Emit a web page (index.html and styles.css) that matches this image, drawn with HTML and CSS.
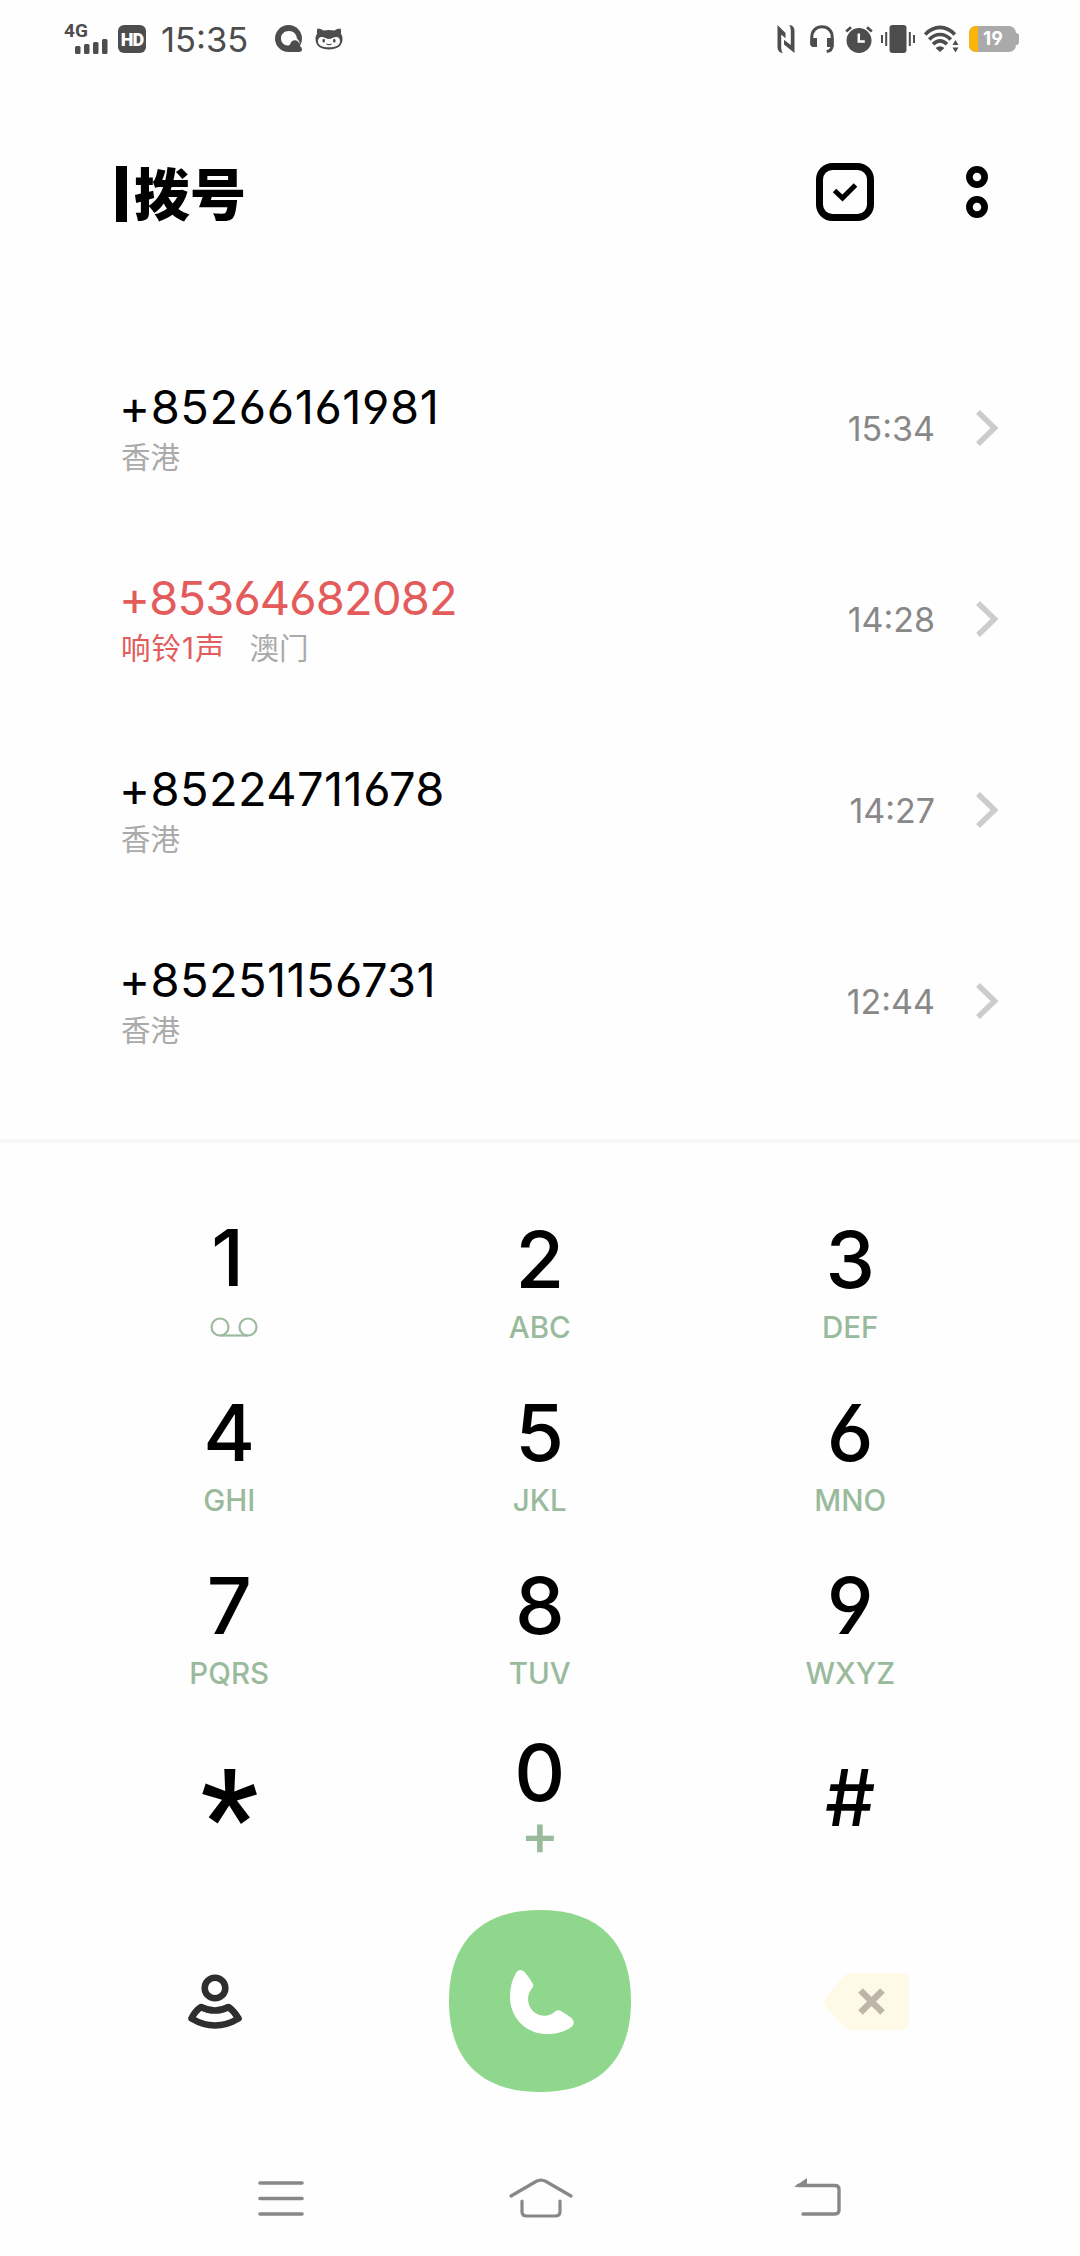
FILE: index.html
```html
<!DOCTYPE html>
<html lang="zh-CN">
<head>
    <meta charset="UTF-8">
    <title>拨号</title>
    <link rel="stylesheet" href="styles.css">
</head>
<body>
    <div class="status-bar">
        <div class="status-left">
            <div class="signal">
                <span class="signal-type">4G</span>
                <svg class="signal-bars" width="33" height="16" viewBox="0 0 33 16" fill="#4d4d4d">
                    <rect x="0" y="8" width="5.5" height="8" rx="1.5"/>
                    <rect x="9" y="6" width="5.5" height="10" rx="1.5"/>
                    <rect x="18" y="4" width="5.5" height="12" rx="1.5"/>
                    <rect x="27" y="1" width="5.5" height="15" rx="1.5"/>
                </svg>
            </div>
            <div class="hd-badge">HD</div>
            <span class="clock">15:35</span>
            <svg class="q-icon" width="28" height="28" viewBox="0 0 28 28">
                <circle cx="13.5" cy="13.5" r="13.5" fill="#4d4d4d"/>
                <path d="M14 6c-5 0-8 3.400-8 7.500 0 4 3 7 6.500 7 1.500 0 2.500-.5 3-2 .6-2 2.500-3.500 4.700-3.300 1.600.1 3.300 1.300 5.300 4.300-1.500-4-2.600-5-3.500-6C21.500 9 18.500 6 14 6z" fill="#fdfdfd"/>
                <path d="M12 22c2-1 3-1.500 4-3.500 1.600-3 5.600-2.600 7.300.2 1.100 1.900 3.700 3.300 3.700 5.600 0 1.800-1 2.700-3 2.700h-9z" fill="#4d4d4d"/>
            </svg>
            <svg class="cat-icon" width="28" height="22" viewBox="0 0 28 22">
                <path d="M2.500.5C4.500.5 7 1.300 8.500 2.600c3.500-.7 7.500-.7 11 0C21 1.300 23.500.5 25.500.5c.7 2 .8 3.700.4 5.300C27.200 7.500 27.500 9 27.500 11c0 7-5.500 10.500-13.500 10.500S.5 18 .5 11c0-2 .3-3.500 1.600-5.200C1.700 4.200 1.800 2.500 2.500.5z" fill="#4d4d4d"/>
                <path d="M6 9c2.500-.7 5.500 2 8 2s5.500-2.700 8-2c2 .6 3 2 3 4.200 0 4.300-4.600 6.100-11 6.100S3 17.500 3 13.200C3 11 4 9.600 6 9z" fill="#fdfdfd"/>
                <ellipse cx="8.700" cy="12.700" rx="1.300" ry="1.900" fill="#4d4d4d"/>
                <ellipse cx="19.300" cy="12.700" rx="1.300" ry="1.900" fill="#4d4d4d"/>
                <path d="M11.500 16q2.500 1.300 5 0" fill="none" stroke="#4d4d4d" stroke-width="1.200"/>
            </svg>
        </div>
        <div class="status-right">
            <svg width="18" height="28" viewBox="0 0 18 28" fill="#4d4d4d">
                <path d="M.5 0L8.500 8v5.200L4.200 9.500V23q0 3 1.600 5Q.5 27.500.5 22z"/>
                <path d="M17.500 28L7 19.500v-4.700l6.800 5.200V5q0-3-1.600-5 5.300.5 5.300 6z"/>
            </svg>
            <svg class="headset" width="24" height="28" viewBox="0 0 24 28">
                <path d="M1.800 20v-8C1.800 6 6 1.800 12 1.800S22.200 6 22.200 12v8q0 6-5.500 6.500" fill="none" stroke="#4d4d4d" stroke-width="3"/>
                <path d="M.5 13H7v9H3Q.5 22 .5 19zM17 13h6.500v9H17z" fill="#4d4d4d"/>
            </svg>
            <svg class="alarm" width="28" height="28" viewBox="0 0 28 28">
                <circle cx="14" cy="15.500" r="12.500" fill="#4d4d4d"/>
                <path d="M1.200 6.500L6 2.200M26.800 6.500L22 2.200" stroke="#4d4d4d" stroke-width="2.800"/>
                <path d="M13.800 8.500v8h6" fill="none" stroke="#fdfdfd" stroke-width="2.500"/>
            </svg>
            <svg class="vibrate" width="34" height="28" viewBox="0 0 34 28" fill="#4d4d4d">
                <rect x="8.500" y="0" width="17" height="28" rx="3"/>
                <rect x="4.200" y="7" width="2" height="14"/>
                <rect x="0" y="10" width="2" height="8"/>
                <rect x="27.800" y="7" width="2" height="14"/>
                <rect x="32" y="10" width="2" height="8"/>
            </svg>
            <svg class="wifi" width="36" height="28" viewBox="0 0 36 28">
                <g fill="none" stroke="#4d4d4d" stroke-width="3.600">
                    <path d="M1.200 9.500C10 0 22 0 30.800 9.500"/>
                    <path d="M5.200 14.500C11.500 7.800 20.500 7.800 26.800 14.500"/>
                    <path d="M9 19.300c4.500-4.400 9.500-4.400 14 0"/>
                </g>
                <path d="M11.500 23q4.500-3.500 9 0L16 27z" fill="#4d4d4d"/>
                <path d="M28.500 20l3-5 3 5zM28.500 22.500h6l-3 5z" fill="#4d4d4d"/>
            </svg>
            <div class="battery">
                <div class="battery-body">
                    <span class="battery-level"></span>
                    <span class="battery-text">19</span>
                </div>
                <span class="battery-tip"></span>
            </div>
        </div>
    </div>

    <div class="header">
        <div class="header-title">
            <span class="title-bar"></span>
            <h1>拨号</h1>
        </div>
        <div class="header-actions">
            <svg width="58" height="58" viewBox="0 0 58 58" fill="none" stroke="#000">
                <rect x="3.500" y="3.500" width="51" height="51" rx="13" stroke-width="7"/>
                <path d="M18.500 27.500l8 7.500 13-13" stroke-width="5"/>
            </svg>
            <svg class="more" width="22" height="52" viewBox="0 0 22 52" fill="none" stroke="#000" stroke-width="6.700">
                <circle cx="11" cy="11" r="7.600"/>
                <circle cx="11" cy="41" r="7.600"/>
            </svg>
        </div>
    </div>

    <div class="call-list">
        <div class="call-item">
            <div class="call-info">
                <div class="call-number">+85266161981</div>
                <div class="call-place">香港</div>
            </div>
            <span class="call-time">15:34</span>
            <svg class="chevron" width="22" height="36" viewBox="0 0 22 36"><path d="M2 2l16.500 16L2 34"/></svg>
        </div>
        <div class="call-item missed">
            <div class="call-info">
                <div class="call-number">+85364682082</div>
                <div class="call-place"><span class="ring">响铃1声</span>澳门</div>
            </div>
            <span class="call-time">14:28</span>
            <svg class="chevron" width="22" height="36" viewBox="0 0 22 36"><path d="M2 2l16.500 16L2 34"/></svg>
        </div>
        <div class="call-item">
            <div class="call-info">
                <div class="call-number">+85224711678</div>
                <div class="call-place">香港</div>
            </div>
            <span class="call-time">14:27</span>
            <svg class="chevron" width="22" height="36" viewBox="0 0 22 36"><path d="M2 2l16.500 16L2 34"/></svg>
        </div>
        <div class="call-item">
            <div class="call-info">
                <div class="call-number">+85251156731</div>
                <div class="call-place">香港</div>
            </div>
            <span class="call-time">12:44</span>
            <svg class="chevron" width="22" height="36" viewBox="0 0 22 36"><path d="M2 2l16.500 16L2 34"/></svg>
        </div>
    </div>

    <div class="keypad">
        <div class="key key-one">
            <span class="digit">1</span>
            <svg class="voicemail" width="48" height="20" viewBox="0 0 48 20" fill="none" stroke="#9dba9e" stroke-width="2.200">
                <circle cx="10" cy="10" r="8.500"/>
                <circle cx="38" cy="10" r="8.500"/>
                <path d="M10 18.500h28"/>
            </svg>
        </div>
        <div class="key"><span class="digit">2</span><span class="letters">ABC</span></div>
        <div class="key"><span class="digit">3</span><span class="letters">DEF</span></div>
        <div class="key"><span class="digit">4</span><span class="letters">GHI</span></div>
        <div class="key"><span class="digit">5</span><span class="letters">JKL</span></div>
        <div class="key"><span class="digit">6</span><span class="letters">MNO</span></div>
        <div class="key"><span class="digit">7</span><span class="letters">PQRS</span></div>
        <div class="key"><span class="digit">8</span><span class="letters">TUV</span></div>
        <div class="key"><span class="digit">9</span><span class="letters">WXYZ</span></div>
        <div class="key key-star"><span class="digit">*</span></div>
        <div class="key key-zero"><span class="digit">0</span><span class="letters">+</span></div>
        <div class="key key-hash"><span class="digit">#</span></div>
    </div>

    <div class="actions">
        <div class="action">
            <svg class="contact" width="56" height="56" viewBox="0 0 56 56" fill="none" stroke="#2e2e2e" stroke-width="6.600" stroke-linejoin="round">
                <circle cx="28" cy="14" r="10.300"/>
                <path d="M14 33Q28 40 41.500 33Q47 37 51.500 44.500Q28 58.500 4.500 44.500Q8 37 14 33z"/>
            </svg>
        </div>
        <div class="action">
            <svg width="182" height="182" viewBox="0 0 182 182">
                <path d="M91 0C150 0 182 32 182 91S150 182 91 182S0 150 0 91S32 0 91 0z" fill="#8fd78d"/>
                <path d="M67 63C69.500 59 73 59 76 62.500Q80 67 84 74Q85 76.500 82.500 79C78.500 84 78 91 81 97C86 106 98 109 106 101.500Q108.500 99.500 111 100.500Q118 104.500 122.500 108Q126.500 112 123.500 116C117 122 106 124.500 96 124C76 123 61 107 61 87Q61 73 67 63z" fill="#fff"/>
            </svg>
        </div>
        <div class="action">
            <svg class="delete" width="87" height="58" viewBox="0 0 87 58">
                <path d="M2 26L19 5Q23 0 29 0H79Q86 0 86 7V50Q86 57 79 57H29Q23 57 19 52L2 32Q0 29 2 26z" fill="#fff9e8"/>
                <path d="M37.500 17.500l22 22M59.500 17.500l-22 22" stroke="#bdb6aa" stroke-width="6.500"/>
            </svg>
        </div>
    </div>

    <div class="nav-bar">
        <svg width="46" height="40" viewBox="0 0 46 40" fill="none" stroke="#888" stroke-width="3.600" stroke-linecap="round">
            <path d="M2 5h42M2 20.500h42M2 36h42"/>
        </svg>
        <svg class="nav-home" width="64" height="40" viewBox="0 0 64 40" fill="none" stroke="#888" stroke-width="3.200" stroke-linecap="round">
            <path d="M2 18L27 3.500Q32 .7 37 3.500L62 18"/>
            <path d="M13 23v11q0 4 5 4h28q5 0 5-4V23"/>
        </svg>
        <svg class="nav-back" width="48" height="40" viewBox="0 0 48 40" fill="none" stroke="#888" stroke-width="3.400">
            <path d="M4 7.500h37q4 0 4 4V32q0 4-4 4H9" stroke-linecap="round"/>
            <path d="M0 9L13 0v9z" fill="#888" stroke="none"/>
        </svg>
    </div>
</body>
</html>
```

FILE: styles.css
```css
body {
    margin: 0;
    width: 1080px;
    height: 2256px;
    overflow: hidden;
    background-color: #fefefe;
    color: #000;
    font-family: Inter, "Noto Sans CJK SC", sans-serif;
    font-feature-settings: "cv03", "cv04";
}

svg {
    display: block;
    flex-shrink: 0;
}

/* status bar */
.status-bar {
    display: flex;
    justify-content: space-between;
    align-items: center;
    height: 78px;
    padding: 0 61px 0 64px;
    color: #4d4d4d;
}

.status-left,
.status-right {
    display: flex;
    align-items: center;
}

.signal {
    width: 43px;
    height: 30px;
    margin-right: 11px;
}

.signal-type {
    display: block;
    height: 14px;
    font-family: Roboto, sans-serif;
    font-size: 19px;
    font-weight: 700;
    line-height: 14px;
}

.signal-bars {
    margin-left: 11px;
}

.hd-badge {
    width: 28px;
    height: 28px;
    margin-right: 15px;
    border-radius: 6px;
    background-color: #4d4d4d;
    color: #fff;
    font-family: Roboto, sans-serif;
    font-size: 18px;
    font-weight: 900;
    line-height: 29px;
    text-align: center;
    letter-spacing: -1px;
}

.clock {
    width: 114px;
    padding-top: 2px;
    font-size: 34.5px;
    line-height: 40px;
}

.cat-icon {
    margin-left: 12px;
}

.headset {
    margin-left: 15px;
}

.alarm {
    margin-left: 11px;
}

.vibrate {
    margin-left: 8px;
}

.wifi {
    margin-left: 9px;
}

.battery {
    display: flex;
    align-items: center;
    margin-left: 9px;
}

.battery-body {
    display: flex;
    width: 47px;
    height: 26px;
    border-radius: 7px;
    background-color: #aaa;
    overflow: hidden;
}

.battery-level {
    width: 9px;
    background-color: #fbb408;
}

.battery-text {
    width: 30px;
    color: #fff;
    font-size: 19px;
    font-weight: 700;
    line-height: 26px;
    text-align: center;
}

.battery-tip {
    width: 3px;
    height: 12px;
    border-radius: 0 3px 3px 0;
    background-color: #aaa;
}

/* header */
.header {
    display: flex;
    justify-content: space-between;
    height: 256px;
    padding: 85px 92px 0 116px;
    box-sizing: border-box;
}

.header-title {
    display: flex;
    align-items: flex-start;
}

.title-bar {
    width: 11px;
    height: 56px;
    margin: 3px 7px 0 0;
    background-color: #000;
}

.header h1 {
    margin: -2px 0 0;
    font-family: "Noto Sans CJK SC", sans-serif;
    font-size: 56px;
    font-weight: 900;
    line-height: 60px;
}

.header-actions {
    display: flex;
}

.more {
    margin: 3px 0 0 92px;
}

/* recent calls */
.call-list {
    height: 805px;
    border-bottom: 4px solid #f7f7f7;
}

.call-item {
    display: flex;
    height: 191px;
    padding: 0 82px 0 121px;
}

.call-info {
    flex: 1;
    padding-top: 43px;
}

.call-number {
    margin-left: -2px;
    font-size: 47px;
    line-height: 60px;
    letter-spacing: 0.4px;
}

.call-item:first-child .call-number {
    letter-spacing: 0.6px;
}

.missed .call-number {
    letter-spacing: -0.85px;
}

.call-place {
    color: #aaa;
    font-size: 29.5px;
    line-height: 40px;
}

.missed .call-number,
.ring {
    color: #e35b5b;
}

.ring {
    margin-right: 24px;
    letter-spacing: 1px;
}

.call-time {
    margin-top: 75px;
    color: #888;
    font-size: 34px;
    line-height: 40px;
}

.chevron {
    margin: 76px 0 0 41px;
    fill: none;
    stroke: #ccc;
    stroke-width: 5.5;
}

/* keypad */
.keypad {
    display: grid;
    grid-template-columns: repeat(3, 310.5px);
    grid-template-rows: 173px 173px 173px 182px;
    padding: 66px 74px 0 74px;
}

.key {
    display: flex;
    flex-direction: column;
    align-items: center;
}

.digit {
    height: 100px;
    font-size: 79px;
    font-weight: 500;
    line-height: 101px;
}

.letters {
    color: #9aba9c;
    font-size: 29.5px;
    font-weight: 500;
    line-height: 36px;
}

.key-one .digit {
    margin: -2px 3px 2px 0;
}

.voicemail {
    margin: 8px 0 0 10px;
}

.key-zero {
    margin-top: -6px;
}

.key-zero .letters {
    font-size: 58px;
    line-height: 24px;
}

.key-star .digit {
    padding-top: 39px;
    font-family: Roboto, sans-serif;
    font-size: 130px;
}

.key-hash .digit {
    padding-top: 19px;
}

/* contact, call, delete */
.actions {
    display: grid;
    grid-template-columns: repeat(3, 310px);
    height: 182px;
    padding-left: 75px;
}

.action {
    display: flex;
    align-items: center;
    justify-content: center;
}

.contact {
    margin: 1px 30px 0 0;
}

.delete {
    margin: 1px 0 0 32px;
}

/* system navigation */
.nav-bar {
    display: flex;
    padding: 86px 0 0 258px;
}

.nav-home {
    margin-left: 205px;
}

.nav-back {
    margin-left: 221px;
}
```
